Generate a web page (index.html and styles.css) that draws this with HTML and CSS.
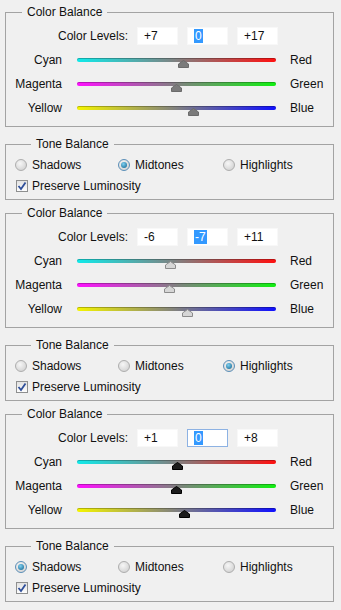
FILE: index.html
```html
<!DOCTYPE html>
<html lang="en">

<head>
  <title>Color Balance</title>
  <meta charset="utf-8">
  <link rel="stylesheet" href="styles.css">
</head>

<body>
  <!-- first set -->
  <fieldset class="group color">
    <legend>Color Balance</legend>
    <div class="levels">
      <span class="levels-label">Color Levels:</span>
      <div class="level">+7</div>
      <div class="level"><span class="sel">0</span></div>
      <div class="level">+17</div>
    </div>
    <div class="slider">
      <span class="left">Cyan</span>
      <div class="track cr">
        <svg class="thumb mid" style="left: 53.5%" viewBox="0 0 11 8"><path d="M5.5 .5 L10.5 4 V7.5 H.5 V4 Z"/></svg>
      </div>
      <span class="right">Red</span>
    </div>
    <div class="slider">
      <span class="left">Magenta</span>
      <div class="track mg">
        <svg class="thumb mid" style="left: 50%" viewBox="0 0 11 8"><path d="M5.5 .5 L10.5 4 V7.5 H.5 V4 Z"/></svg>
      </div>
      <span class="right">Green</span>
    </div>
    <div class="slider">
      <span class="left">Yellow</span>
      <div class="track yb">
        <svg class="thumb mid" style="left: 58.5%" viewBox="0 0 11 8"><path d="M5.5 .5 L10.5 4 V7.5 H.5 V4 Z"/></svg>
      </div>
      <span class="right">Blue</span>
    </div>
  </fieldset>

  <fieldset class="group tone">
    <legend>Tone Balance</legend>
    <div class="radios">
      <label class="radio-item"><span class="radio"></span>Shadows</label>
      <label class="radio-item"><span class="radio on"></span>Midtones</label>
      <label class="radio-item"><span class="radio"></span>Highlights</label>
    </div>
    <label class="check-row">
      <span class="check"><svg viewBox="0 0 10 10"><path d="M1.5 5 L4 8 L8.5 1.5"/></svg></span>Preserve Luminosity
    </label>
  </fieldset>

  <!-- second set -->
  <fieldset class="group color">
    <legend>Color Balance</legend>
    <div class="levels">
      <span class="levels-label">Color Levels:</span>
      <div class="level">-6</div>
      <div class="level"><span class="sel">-7</span></div>
      <div class="level">+11</div>
    </div>
    <div class="slider">
      <span class="left">Cyan</span>
      <div class="track cr">
        <svg class="thumb light" style="left: 47%" viewBox="0 0 11 8"><path d="M5.5 .5 L10.5 4 V7.5 H.5 V4 Z"/></svg>
      </div>
      <span class="right">Red</span>
    </div>
    <div class="slider">
      <span class="left">Magenta</span>
      <div class="track mg">
        <svg class="thumb light" style="left: 46.5%" viewBox="0 0 11 8"><path d="M5.5 .5 L10.5 4 V7.5 H.5 V4 Z"/></svg>
      </div>
      <span class="right">Green</span>
    </div>
    <div class="slider">
      <span class="left">Yellow</span>
      <div class="track yb">
        <svg class="thumb light" style="left: 55.5%" viewBox="0 0 11 8"><path d="M5.5 .5 L10.5 4 V7.5 H.5 V4 Z"/></svg>
      </div>
      <span class="right">Blue</span>
    </div>
  </fieldset>

  <fieldset class="group tone">
    <legend>Tone Balance</legend>
    <div class="radios">
      <label class="radio-item"><span class="radio"></span>Shadows</label>
      <label class="radio-item"><span class="radio"></span>Midtones</label>
      <label class="radio-item"><span class="radio on"></span>Highlights</label>
    </div>
    <label class="check-row">
      <span class="check"><svg viewBox="0 0 10 10"><path d="M1.5 5 L4 8 L8.5 1.5"/></svg></span>Preserve Luminosity
    </label>
  </fieldset>

  <!-- third set -->
  <fieldset class="group color">
    <legend>Color Balance</legend>
    <div class="levels">
      <span class="levels-label">Color Levels:</span>
      <div class="level">+1</div>
      <div class="level focus"><span class="sel">0</span></div>
      <div class="level">+8</div>
    </div>
    <div class="slider">
      <span class="left">Cyan</span>
      <div class="track cr">
        <svg class="thumb dark" style="left: 50.5%" viewBox="0 0 11 8"><path d="M5.5 .5 L10.5 4 V7.5 H.5 V4 Z"/></svg>
      </div>
      <span class="right">Red</span>
    </div>
    <div class="slider">
      <span class="left">Magenta</span>
      <div class="track mg">
        <svg class="thumb dark" style="left: 50%" viewBox="0 0 11 8"><path d="M5.5 .5 L10.5 4 V7.5 H.5 V4 Z"/></svg>
      </div>
      <span class="right">Green</span>
    </div>
    <div class="slider">
      <span class="left">Yellow</span>
      <div class="track yb">
        <svg class="thumb dark" style="left: 54%" viewBox="0 0 11 8"><path d="M5.5 .5 L10.5 4 V7.5 H.5 V4 Z"/></svg>
      </div>
      <span class="right">Blue</span>
    </div>
  </fieldset>

  <fieldset class="group tone">
    <legend>Tone Balance</legend>
    <div class="radios">
      <label class="radio-item"><span class="radio on"></span>Shadows</label>
      <label class="radio-item"><span class="radio"></span>Midtones</label>
      <label class="radio-item"><span class="radio"></span>Highlights</label>
    </div>
    <label class="check-row">
      <span class="check"><svg viewBox="0 0 10 10"><path d="M1.5 5 L4 8 L8.5 1.5"/></svg></span>Preserve Luminosity
    </label>
  </fieldset>
</body>

</html>
```

FILE: styles.css
```css
* {
  box-sizing: border-box;
}

body {
  margin: 0;
  padding: 5px 0 0 0;
  background-color: #f0f0f0;
  font-family: "Liberation Sans", Arial, sans-serif;
  font-size: 12px;
  color: #111;
}

/* group boxes */
.group {
  margin: 0 7px 0 5px;
  padding: 0;
  border: 1px solid #a3a3a3;
}

.group legend {
  margin-left: 16px;
  padding: 0 5px;
  line-height: 14px;
  height: 14px;
}

.color {
  padding: 8px 0 6px 0;
  margin-bottom: 10px;
}

.tone {
  padding: 3px 0 3px 9px;
  margin-bottom: 6px;
}

/* color levels inputs */
.levels {
  display: flex;
  align-items: center;
  height: 18px;
  margin-bottom: 3px;
}

.levels-label {
  width: 122px;
  text-align: right;
  margin-right: 9px;
}

.level {
  width: 41px;
  height: 18px;
  line-height: 16px;
  padding-left: 6px;
  margin-right: 9px;
  background-color: #fff;
  border: 1px solid #f8f8f8;
}

.level.focus {
  border-color: #8db2e3;
}

.sel {
  background-color: #3399ff;
  color: #fff;
  padding: 0 1px;
}

/* slider rows */
.slider {
  display: flex;
  align-items: center;
  height: 24px;
}

.left {
  width: 56px;
  text-align: right;
}

.right {
  margin-left: 14px;
}

.track {
  position: relative;
  width: 199px;
  height: 4px;
  margin-left: 15px;
  margin-top: -1px;
  border-radius: 2px;
  box-shadow: inset 0 1px 0 rgba(0, 0, 0, .25);
}

.cr {
  background: linear-gradient(to right, #10eaea, #808080 50%, #ff1010);
}

.mg {
  background: linear-gradient(to right, #ff10ff, #808080 50%, #10f010);
}

.yb {
  background: linear-gradient(to right, #f5f500, #808080 50%, #1010ff);
}

.thumb {
  position: absolute;
  top: 2px;
  width: 11px;
  height: 8px;
  margin-left: -5.5px;
  stroke-width: 1;
}

.thumb.mid {
  fill: #7b7b7b;
  stroke: #6b6b6b;
}

.thumb.light {
  fill: #d6d6d6;
  stroke: #8c8c8c;
}

.thumb.dark {
  fill: #1c1c1c;
  stroke: #000;
}

/* tone balance */
.radios {
  display: flex;
  height: 21px;
  align-items: center;
}

.radio-item {
  display: flex;
  align-items: center;
  width: 103px;
}

.radio-item:nth-child(2) {
  width: 105px;
}

.radio {
  width: 12px;
  height: 12px;
  margin-right: 5px;
  border-radius: 50%;
  border: 1px solid #adadad;
  background: radial-gradient(circle at 40% 35%, #f6f6f6, #cbcbcb);
  display: flex;
  align-items: center;
  justify-content: center;
}

.radio.on {
  border-color: #5b8fb8;
}

.radio.on::after {
  content: "";
  width: 6px;
  height: 6px;
  border-radius: 50%;
  background: radial-gradient(circle at 40% 35%, #7fd0f0, #0d5f8c);
}

.check-row {
  display: flex;
  align-items: center;
  height: 21px;
  padding-left: 1px;
}

.check {
  width: 12px;
  height: 12px;
  margin-right: 4px;
  border: 1px solid #8e8f8f;
  background: linear-gradient(#e2e2e2, #fdfdfd);
  display: flex;
}

.check svg {
  width: 10px;
  height: 10px;
  fill: none;
  stroke: #2f4f9a;
  stroke-width: 1.8;
}
```
